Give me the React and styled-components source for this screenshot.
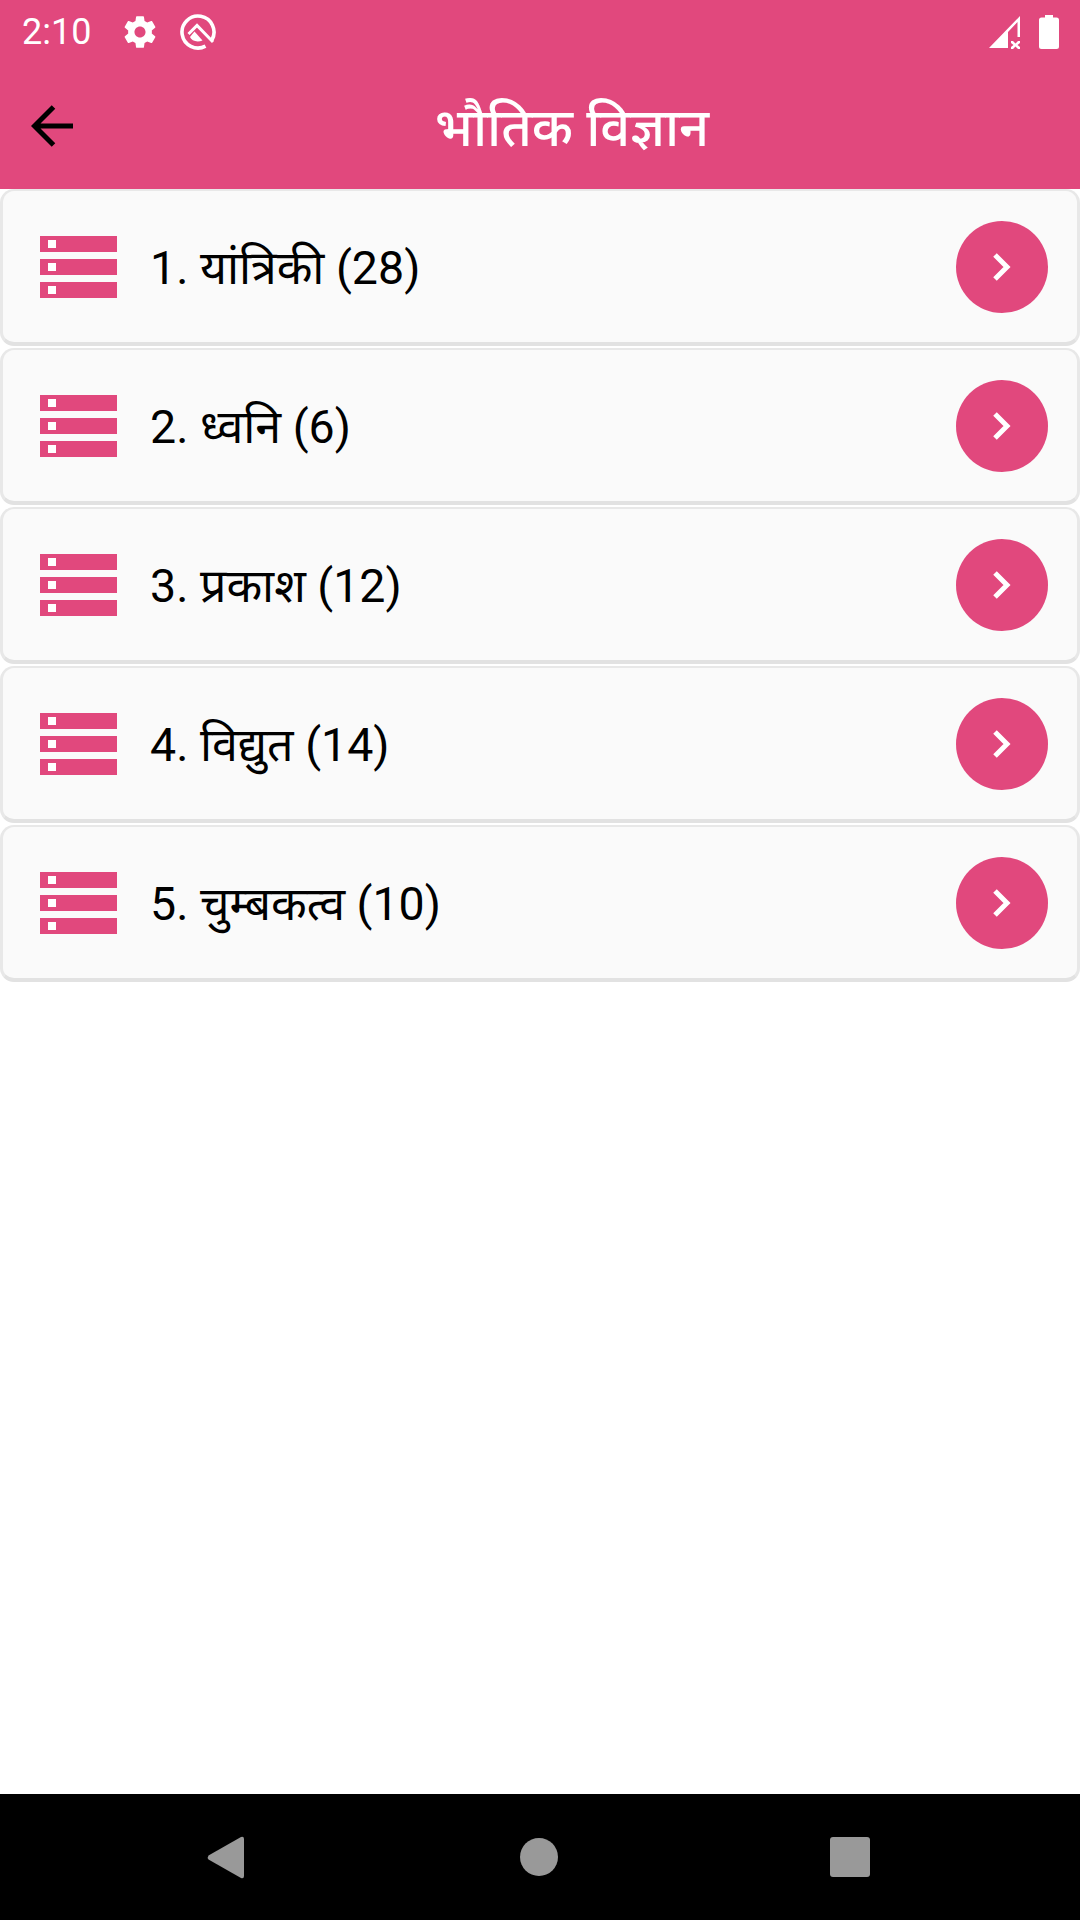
import styled, { createGlobalStyle } from "styled-components";

const GlobalStyle = createGlobalStyle`
  html, body {
    margin: 0;
    padding: 0;
    background: #fff;
  }
  * {
    box-sizing: border-box;
  }
`;

const pink = "#e1487d";
const font = `Roboto, "Noto Sans", "Liberation Sans", sans-serif`;

const Page = styled.div`
  width: 1080px;
  height: 1920px;
  display: flex;
  flex-direction: column;
  background: #fff;
  font-family: ${font};
`;

const Header = styled.header`
  height: 189px;
  flex: none;
  background: ${pink};
`;

const StatusBar = styled.div`
  height: 63px;
  display: flex;
  align-items: center;
  padding: 0 21px 0 22px;
  color: #fff;
`;

const Time = styled.span`
  font-size: 36px;
  font-weight: 400;
  width: 99px;
`;

const StatusLeft = styled.div`
  display: flex;
  align-items: center;
  gap: 21px;
`;

const StatusRight = styled.div`
  margin-left: auto;
  display: flex;
  align-items: center;
  gap: 17px;
`;

const Toolbar = styled.div`
  height: 125px;
  display: flex;
  align-items: center;
`;

const BackButton = styled.div`
  width: 106px;
  display: flex;
  justify-content: center;
`;

const Title = styled.h1`
  flex: 1;
  margin: 0;
  padding: 0 42px 0 0;
  text-align: center;
  color: #fff;
  font-size: 52.5px;
  font-weight: 500;
`;

const List = styled.main`
  flex: 1;
`;

const Card = styled.div`
  height: 157px;
  margin-bottom: 2px;
  display: flex;
  align-items: center;
  padding: 1px 29px 0 37px;
  background: #fafafa;
  border: 3px solid #e8e8e8;
  border-top-width: 2px;
  border-bottom: 4px solid #e2e2e2;
  border-radius: 14px;
`;

const Label = styled.span`
  flex: 1;
  margin-left: 33px;
  padding-bottom: 2px;
  font-size: 46.5px;
  color: #000;
`;

const Go = styled.div`
  width: 92px;
  height: 92px;
  border-radius: 50%;
  background: ${pink};
  display: flex;
  align-items: center;
  justify-content: center;
`;

const NavBar = styled.nav`
  height: 126px;
  flex: none;
  background: #000;
  display: flex;
  align-items: center;
  padding-left: 207px;
`;

const NavCircle = styled.div`
  width: 38px;
  height: 38px;
  margin-left: 276px;
  border-radius: 50%;
  background: #999;
`;

const NavSquare = styled.div`
  width: 40px;
  height: 40px;
  margin-left: 272px;
  border-radius: 3px;
  background: #999;
`;

const items = ["1. यांत्रिकी (28)", "2. ध्वनि (6)", "3. प्रकाश (12)", "4. विद्युत (14)", "5. चुम्बकत्व (10)"];

function GearIcon() {
  return (
    <svg width="38" height="38" viewBox="0 0 24 24" fill="#fff">
      <path d="M19.43 12.98c.04-.32.07-.64.07-.98s-.03-.66-.07-.98l2.11-1.65c.19-.15.24-.42.12-.64l-2-3.46c-.12-.22-.39-.3-.61-.22l-2.49 1c-.52-.4-1.08-.73-1.69-.98l-.38-2.65C14.46 2.18 14.25 2 14 2h-4c-.25 0-.46.18-.49.42l-.38 2.65c-.61.25-1.17.59-1.69.98l-2.49-1c-.23-.09-.49 0-.61.22l-2 3.46c-.13.22-.07.49.12.64l2.11 1.65c-.04.32-.07.65-.07.98s.03.66.07.98l-2.11 1.65c-.19.15-.24.42-.12.64l2 3.46c.12.22.39.3.61.22l2.49-1c.52.4 1.08.73 1.69.98l.38 2.65c.03.24.24.42.49.42h4c.25 0 .46-.18.49-.42l.38-2.65c.61-.25 1.17-.59 1.69-.98l2.49 1c.23.09.49 0 .61-.22l2-3.46c.12-.22.07-.49-.12-.64l-2.11-1.65zM12 15.5c-1.93 0-3.5-1.57-3.5-3.5s1.57-3.5 3.5-3.5 3.5 1.57 3.5 3.5-1.57 3.5-3.5 3.5z" />
    </svg>
  );
}

function QIcon() {
  return (
    <svg width="36" height="36" viewBox="0 0 36 36" fill="none">
      <path d="M25.5 32.2A16 16 0 1 1 32 25.8" stroke="#fff" strokeWidth="3.6" />
      <path d="M8.5 20 L17 11.5 L33 28" stroke="#fff" strokeWidth="3" />
      <path d="M10 23 L14.5 17.5 L22.5 26.5 C17 28.5 11.5 27 10 23 Z" fill="#fff" />
    </svg>
  );
}

function SignalIcon() {
  return (
    <svg width="34" height="34" viewBox="0 0 34 34" fill="#fff">
      <path d="M32 1 V22 H29.5 V7 L20 17 V33 H1 Z" />
      <path d="M23 26 H25 L27.5 28.5 L30 26 H32 V28 L29.5 30 L32 32 V34 H30 L27.5 31.5 L25 34 H23 V32 L25.5 30 L23 28 Z" />
    </svg>
  );
}

function BatteryIcon() {
  return (
    <svg width="20" height="34" viewBox="0 0 20 34" fill="#fff">
      <path d="M6 0 H14 V2.5 H17.5 Q20 2.5 20 5 V31.5 Q20 34 17.5 34 H2.5 Q0 34 0 31.5 V5 Q0 2.5 2.5 2.5 H6 Z" />
    </svg>
  );
}

function BackIcon() {
  return (
    <svg width="44" height="44" viewBox="0 0 44 44" fill="none" stroke="#000" strokeWidth="5">
      <path d="M42 22 H4 M22.5 3 L3.5 22 L22.5 41" />
    </svg>
  );
}

function ServerIcon() {
  return (
    <svg width="77" height="62" viewBox="0 0 77 62">
      {[0, 23, 46].map((y) => (
        <g key={y}>
          <rect x="0" y={y} width="77" height="16" fill={pink} />
          <rect x="8" y={y + 4} width="8" height="8" fill="#fff" />
        </g>
      ))}
    </svg>
  );
}

function ChevronIcon() {
  return (
    <svg width="20" height="30" viewBox="0 0 20 30" fill="none" stroke="#fff" strokeWidth="5">
      <path d="M3 3 L15 15 L3 27" />
    </svg>
  );
}

function TriangleIcon() {
  return (
    <svg width="37" height="43" viewBox="0 0 37 43" fill="#999">
      <path d="M34 1 Q37 0 37 3 V40 Q37 43 34 42 L1.5 23.5 Q0 21.5 1.5 19.5 Z" />
    </svg>
  );
}

export default function App() {
  return (
    <Page>
      <GlobalStyle />
      <Header>
        <StatusBar>
          <Time>2:10</Time>
          <StatusLeft>
            <GearIcon />
            <QIcon />
          </StatusLeft>
          <StatusRight>
            <SignalIcon />
            <BatteryIcon />
          </StatusRight>
        </StatusBar>
        <Toolbar>
          <BackButton>
            <BackIcon />
          </BackButton>
          <Title>भौतिक विज्ञान</Title>
        </Toolbar>
      </Header>
      <List>
        {items.map((item) => (
          <Card key={item}>
            <ServerIcon />
            <Label>{item}</Label>
            <Go>
              <ChevronIcon />
            </Go>
          </Card>
        ))}
      </List>
      <NavBar>
        <TriangleIcon />
        <NavCircle />
        <NavSquare />
      </NavBar>
    </Page>
  );
}
